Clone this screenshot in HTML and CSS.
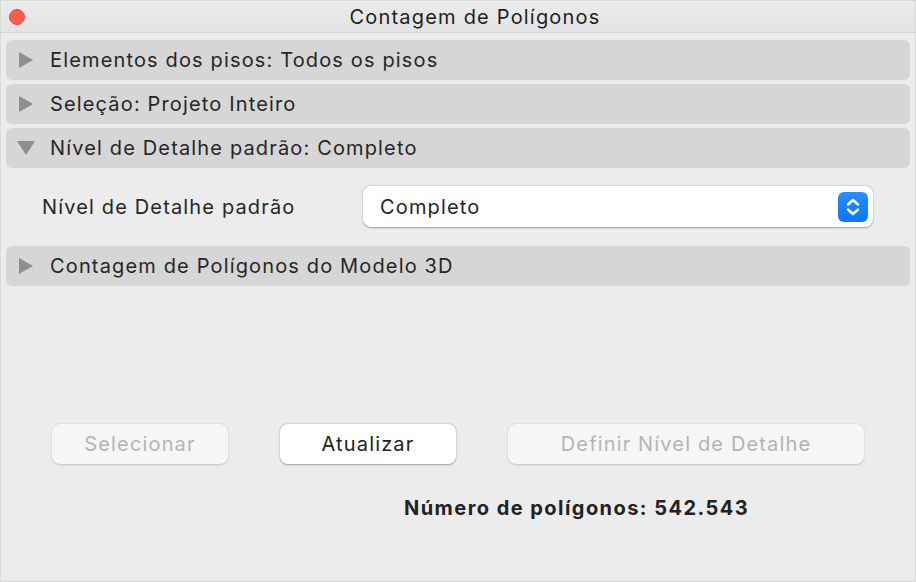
FILE: index.html
```html
<!DOCTYPE html>
<html lang="pt">
<head>
    <meta charset="UTF-8">
    <title>Contagem de Polígonos</title>
    <link rel="stylesheet" href="styles.css">
</head>
<body>
<div class="window">
    <div class="titlebar">
        <span class="close"></span>
        <span class="title">Contagem de Polígonos</span>
    </div>
    <div class="content">
        <div class="section">
            <span class="arrow right"></span>
            <span>Elementos dos pisos: Todos os pisos</span>
        </div>
        <div class="section">
            <span class="arrow right"></span>
            <span>Seleção: Projeto Inteiro</span>
        </div>
        <div class="section">
            <span class="arrow down"></span>
            <span>Nível de Detalhe padrão: Completo</span>
        </div>
        <div class="detail">
            <label class="detail-label">Nível de Detalhe padrão</label>
            <div class="select">
                <span>Completo</span>
                <span class="stepper">
                    <svg width="30" height="30" viewBox="0 0 30 30">
                        <path d="M10 12.5 L15 8 L20 12.5" fill="none" stroke="#fff" stroke-width="2.4" stroke-linecap="round" stroke-linejoin="round"/>
                        <path d="M10 17.5 L15 22 L20 17.5" fill="none" stroke="#fff" stroke-width="2.4" stroke-linecap="round" stroke-linejoin="round"/>
                    </svg>
                </span>
            </div>
        </div>
        <div class="section">
            <span class="arrow right"></span>
            <span>Contagem de Polígonos do Modelo 3D</span>
        </div>
        <div class="buttons">
            <button class="btn small" disabled>Selecionar</button>
            <button class="btn small active">Atualizar</button>
            <button class="btn wide" disabled>Definir Nível de Detalhe</button>
        </div>
        <p class="count">Número de polígonos: 542.543</p>
    </div>
</div>
</body>
</html>
```

FILE: styles.css
```css
body {
    margin: 0;
    font-family: Inter, "Noto Sans", sans-serif;
    background-color: #ececec;
    color: #262626;
}

.window {
    width: 916px;
    height: 582px;
    box-sizing: border-box;
    border: 1px solid #d9d9d9;
    background-color: #ececec;
}

.titlebar {
    height: 31px;
    display: flex;
    align-items: center;
    justify-content: center;
    padding-left: 34px;
    position: relative;
    background: linear-gradient(#ebebeb, #e3e3e3);
    border-bottom: 1px solid #d6d6d6;
}

.close {
    position: absolute;
    left: 8px;
    top: 8px;
    width: 16px;
    height: 16px;
    border-radius: 50%;
    background-color: #fd5b55;
    border: 0.5px solid #e2463f;
    box-sizing: border-box;
}

.title {
    font-size: 20px;
    color: #1e1e1e;
    letter-spacing: 1.2px;
}

.content {
    padding: 7px 5px 0 5px;
}

.section {
    height: 40px;
    margin-bottom: 4px;
    display: flex;
    align-items: center;
    background-color: #d6d6d6;
    border-radius: 6px;
    font-size: 20px;
    letter-spacing: 1.15px;
}

.arrow {
    width: 0;
    height: 0;
    margin-left: 13px;
    margin-right: 17px;
}

.arrow.right {
    border-top: 8px solid transparent;
    border-bottom: 8px solid transparent;
    border-left: 14px solid #8e8e90;
    margin-right: 17px;
}

.arrow.down {
    margin-left: 11px;
    margin-right: 15px;
    border-left: 9px solid transparent;
    border-right: 9px solid transparent;
    border-top: 14px solid #8e8e90;
}

.detail {
    display: flex;
    align-items: center;
    padding: 14px 37px 19px 36px;
}

.detail-label {
    width: 321px;
    font-size: 20px;
    letter-spacing: 1.15px;
}

.select {
    flex: 1;
    height: 41px;
    display: flex;
    align-items: center;
    justify-content: space-between;
    padding: 0 5px 0 17px;
    background-color: #fff;
    border-radius: 8px;
    box-shadow: 0 0.5px 2px rgba(0, 0, 0, 0.35);
    font-size: 20px;
    letter-spacing: 1.15px;
}

.stepper {
    width: 30px;
    height: 30px;
    display: flex;
    border-radius: 6px;
    background: linear-gradient(#2a8dfd, #0a77fa);
}

.buttons {
    display: flex;
    gap: 52px;
    padding-left: 46px;
    margin-top: 138px;
}

.btn {
    height: 40px;
    border: none;
    border-radius: 8px;
    font-family: inherit;
    font-size: 20px;
    letter-spacing: 1.15px;
    background-color: #f6f6f6;
    color: #b4b4b4;
    box-shadow: 0 0.5px 2px rgba(0, 0, 0, 0.18);
}

.btn.small {
    width: 176px;
}

.btn.wide {
    width: 356px;
}

.btn.active {
    background-color: #fff;
    color: #222;
    box-shadow: 0 0.5px 2px rgba(0, 0, 0, 0.35);
}

.count {
    margin: 32px 0 0 0;
    padding-left: 398px;
    font-size: 20px;
    font-weight: bold;
    letter-spacing: 1.45px;
    color: #222;
}
```
